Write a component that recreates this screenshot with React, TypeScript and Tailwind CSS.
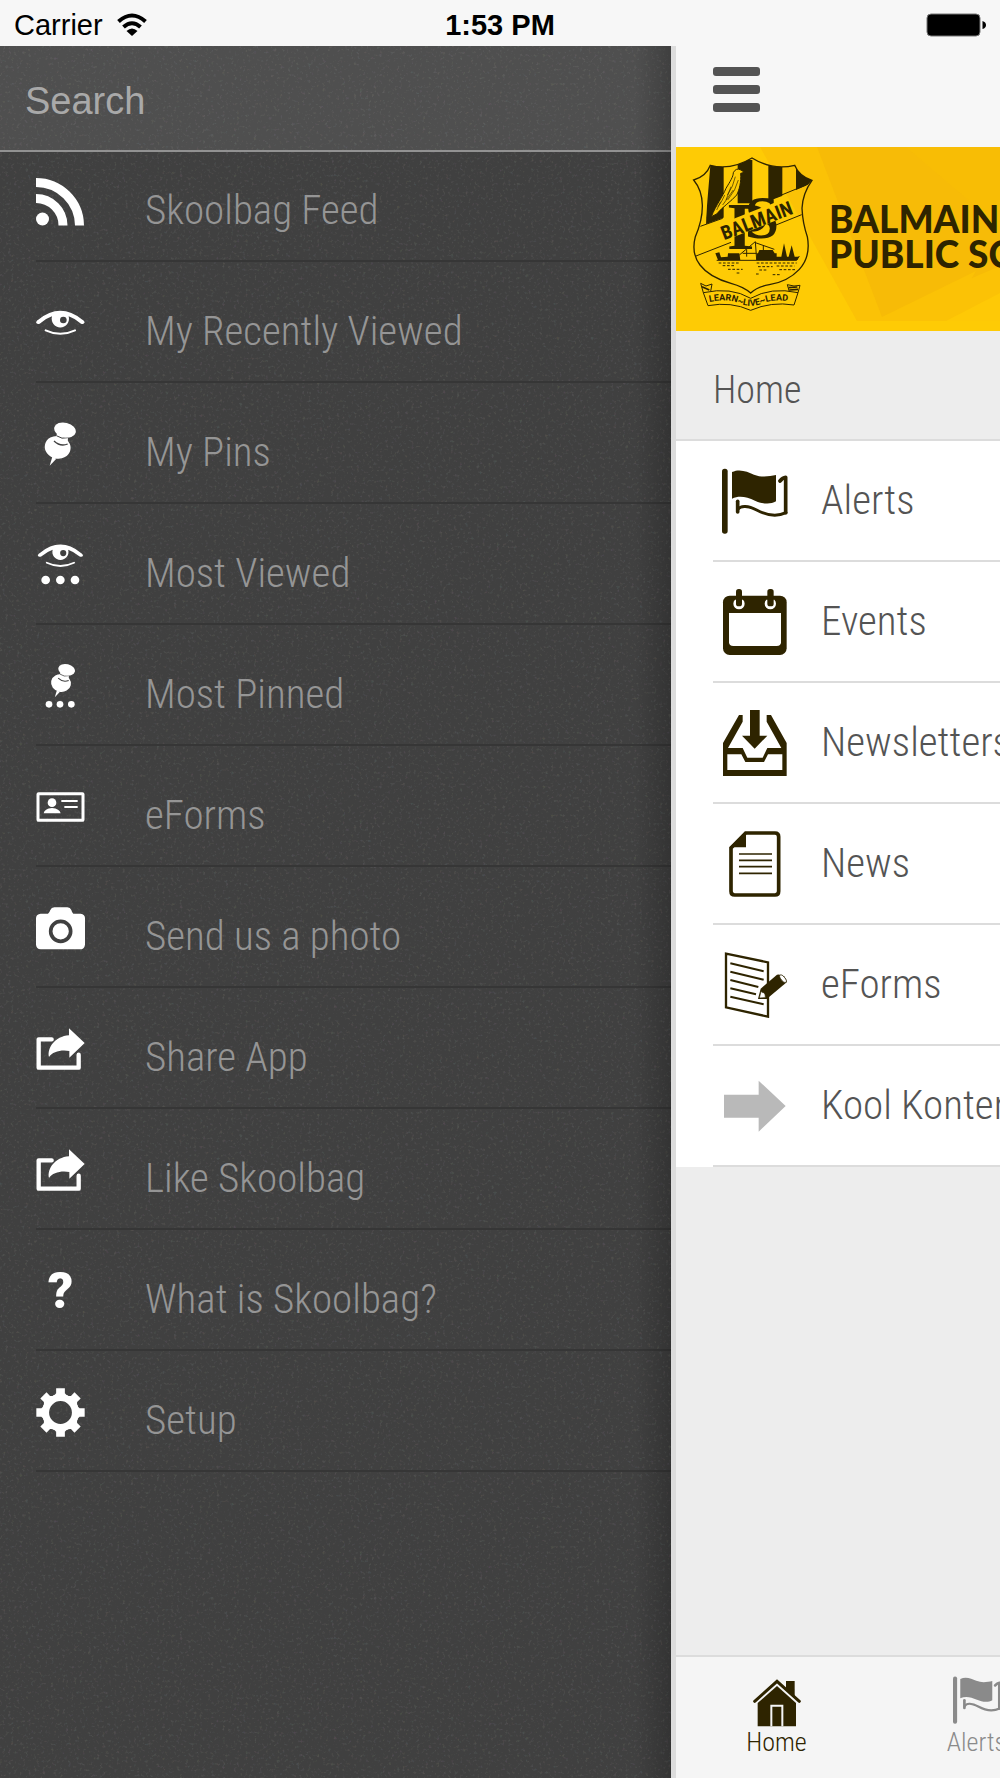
import type { ReactNode } from 'react'

interface MenuItem {
  label: string
  icon: ReactNode
}

const DARK = '#2e2400'

function FeedIcon() {
  return (
    <svg width="49" height="48" viewBox="0 0 49 48" fill="none" stroke="#fff" strokeWidth="9">
      <circle cx="6.5" cy="41" r="6.5" fill="#fff" stroke="none" />
      <path d="M0 20.5A27 27 0 0 1 27 47.5M0 4.5A43.5 43.5 0 0 1 43.5 47.5" />
    </svg>
  )
}

function EyeShape() {
  return (
    <g>
      <path d="M109 131Q111 125 118 122Q148 96 182 96Q216 96 246 122Q253 125 255 131Q253 138 244 135Q225 119 207 113A26 26 0 1 1 157 113Q139 119 120 135Q111 138 109 131Z" fill="#fff" />
      <circle cx="191" cy="124" r="10" fill="#404040" />
      <path d="M138 155Q182 176 226 155" fill="none" stroke="#fff" strokeWidth="6" strokeLinecap="round" />
    </g>
  )
}

function EyeIcon() {
  return (
    <svg width="49" height="26" viewBox="109 94 147 78">
      <EyeShape />
    </svg>
  )
}

function MostViewedIcon() {
  return (
    <svg width="49" height="42" viewBox="109 794 147 126">
      <g transform="translate(13 706) scale(.93)">
        <EyeShape />
      </g>
      <g fill="#fff">
        <circle cx="138" cy="902" r="13" />
        <circle cx="182" cy="902" r="13" />
        <circle cx="226" cy="902" r="13" />
      </g>
    </svg>
  )
}

function PinShape() {
  return (
    <g fill="#fff">
      <path d="M150 558L158 531L170 537Z" />
      <ellipse cx="174" cy="503" rx="39" ry="34" transform="rotate(12 174 503)" />
      <path d="M172 462L206 468L203 492Q184 504 163 486Z" />
      <path d="M163 484Q182 502 204 493" fill="none" stroke="#404040" strokeWidth="4" />
      <path d="M170 468Q186 480 206 474" fill="none" stroke="#404040" strokeWidth="3" />
      <ellipse cx="196" cy="451" rx="33" ry="22" transform="rotate(14 196 451)" />
    </g>
  )
}

function PinIcon() {
  return (
    <svg width="49" height="44" viewBox="109 427 147 132">
      <PinShape />
    </svg>
  )
}

function MostPinnedIcon() {
  return (
    <svg width="49" height="46" viewBox="109 130 147 138">
      <g transform="translate(50 -197) scale(.77)">
        <PinShape />
      </g>
      <g fill="#fff">
        <circle cx="148" cy="254" r="10" />
        <circle cx="181" cy="254" r="10" />
        <circle cx="215" cy="254" r="10" />
      </g>
    </svg>
  )
}

function CardIcon() {
  return (
    <svg width="49" height="30" viewBox="109 515 147 90" fill="none" stroke="#fff">
      <rect x="115" y="520" width="135" height="80" rx="2" strokeWidth="9" />
      <circle cx="157" cy="547" r="13" fill="#fff" stroke="none" />
      <path d="M132 579Q134 565 157 563Q180 565 183 579Z" fill="#fff" stroke="none" />
      <path d="M185 542H234M194 560H234" strokeWidth="6" />
    </svg>
  )
}

function CameraIcon() {
  return (
    <svg width="49" height="43" viewBox="108 857 147 129" fill="#fff">
      <path d="M122 877H144Q148 875 151 866Q154 858 163 858H202Q211 858 214 866Q216 875 220 877H242Q255 879 255 890V970Q253 984 240 984H122Q109 982 108 970V890Q109 878 122 877Z" />
      <circle cx="182" cy="930" r="30" stroke="#404040" strokeWidth="11" />
    </svg>
  )
}

function ShareIcon() {
  return (
    <svg width="49" height="43" viewBox="109 201 147 129">
      <path d="M156 235H117V320H237V281" fill="none" stroke="#fff" strokeWidth="13" strokeLinecap="round" strokeLinejoin="round" />
      <path d="M208 202L255 246L209 290V270C185 265 158 272 148 288C142 262 165 226 208 223Z" fill="#fff" />
    </svg>
  )
}

function GearIcon() {
  return (
    <svg width="49" height="49" viewBox="-73 -73 146 146">
      <circle r="44" fill="none" stroke="#fff" strokeWidth="20" />
      {[0, 45, 90, 135, 180, 225, 270, 315].map((angle) => (
        <path key={angle} d="M-13 -72H13V-57Q16 -52 24 -49L0 -40L-24 -49Q-16 -52 -13 -57Z" fill="#fff" transform={`rotate(${angle})`} />
      ))}
    </svg>
  )
}

function FlagIcon({ size, color }: { size: number; color: string }) {
  return (
    <svg width={size} height={size} viewBox="246 418 198 198" fill={color}>
      <rect x="246" y="420" width="17" height="195" rx="8" />
      <path d="M276 430C300 419 322 429 342 438C365 447 388 443 408 439V518C390 529 365 525 345 516C320 505 298 500 276 510Z" />
      <g fill="none" stroke={color} strokeLinecap="round">
        <path d="M293 518V550" strokeWidth="11" />
        <path d="M294 542C302 529 325 531 350 544C378 559 408 566 438 552" strokeWidth="9" />
        <path d="M437 552V446Q428 447 420 457" strokeWidth="11" strokeLinejoin="round" />
      </g>
    </svg>
  )
}

function CalendarIcon() {
  return (
    <svg width="66" height="66" viewBox="246 780 198 198">
      <rect x="249" y="800" width="191" height="178" rx="20" fill={DARK} />
      <path d="M267 852H423V940Q423 951 410 951H280Q267 951 267 940Z" fill="#fff" />
      <path d="M285 812A17 17 0 1 0 309 812ZM379 812A17 17 0 1 0 403 812Z" fill="#fff" />
      <rect x="288" y="780" width="18" height="52" rx="8" fill={DARK} />
      <rect x="382" y="780" width="19" height="52" rx="8" fill={DARK} />
    </svg>
  )
}

function InboxIcon() {
  return (
    <svg width="66" height="66" viewBox="246 33 198 198" fill={DARK} fillRule="evenodd">
      <path d="M330 33H359V110H382L344 149L306 110H330Z" />
      <path d="M297 48H308V68L264 147H308L322 176H368L382 147H424L380 68V48H393L440 132V231H249V132ZM262 166V213H427V166H384L372 189H316L304 166Z" />
    </svg>
  )
}

function NewsIcon() {
  return (
    <svg width="66" height="66" viewBox="246 395 198 198" fill="none" stroke={DARK}>
      <path d="M317 401H405Q416 401 416 412V576Q416 587 405 587H284Q273 587 273 576V446Z" strokeWidth="11" />
      <path d="M318 398V444H268Z" fill={DARK} stroke="none" />
      <path d="M297 464H396M297 483H396M297 502H396M297 522H396" strokeWidth="5" />
    </svg>
  )
}

function FormIcon() {
  return (
    <svg width="66" height="66" viewBox="246 68 198 198" fill="none" stroke={DARK}>
      <path d="M258 73L384 99V262L258 234Z" strokeWidth="7" />
      <path d="M271 102L371 126M271 127L371 151M271 152L355 173M271 177L348 195M271 202L371 225" strokeWidth="6" />
      <path d="M362 178L411 136Q434 133 441 158L380 209L354 209Z" fill={DARK} stroke="none" />
      <path d="M363 186Q367 191 372 190Q377 196 376 205L358 206Z" fill="#fff" stroke={DARK} strokeWidth="2" />
      <ellipse cx="429" cy="148" rx="6" ry="14" fill="#fff" stroke={DARK} strokeWidth="2" transform="rotate(-38 429 148)" />
    </svg>
  )
}

function ArrowIcon() {
  return (
    <svg width="66" height="66" viewBox="246 430 198 198" fill="#b9b9b9">
      <path d="M252 495H356V453L437 529L356 606V564H252Z" />
    </svg>
  )
}

function HouseIcon() {
  return (
    <svg width="48" height="48" viewBox="341 178 144 144" fill={DARK}>
      <path d="M440 184H466V232L440 208Z" />
      <path d="M413 193L474 246V322H351V246Z" fill="#f5f5f5" />
      <path d="M346 245L413 185L480 245" fill="none" stroke={DARK} strokeWidth="9" strokeLinecap="round" />
      <path d="M413 199L470 250V320H355V250Z" />
      <path d="M396 320V258H429V320" fill="none" stroke="#f5f5f5" strokeWidth="6" />
    </svg>
  )
}

function SchoolCrest() {
  return (
    <svg className="relative shrink-0" width="121" height="156" viewBox="98 48 363 468">
      <defs>
        <clipPath id="crest-top">
          <path d="M153 76Q215 92 278 54Q340 92 406 76Q420 110 458 121L440 141L123 259L139 245Z" />
        </clipPath>
        <path id="motto" d="M150 486Q200 476 230 487Q274 508 318 487Q350 476 404 486" />
      </defs>
      <g clipPath="url(#crest-top)" fill={DARK}>
        <path d="M145 60H193V240L140 262ZM235 60H279V190H235ZM327 60H369V170L327 190ZM410 60H460V128L410 150Z" />
      </g>
      <g fill="none" stroke={DARK} strokeWidth="4">
        <path d="M278 54Q340 92 406 76Q420 110 458 121Q430 160 428 205Q430 250 444 290Q455 350 420 388Q385 425 330 434Q295 440 274 459Q252 440 215 430Q150 412 122 375Q95 340 108 290Q130 240 129 195Q128 150 103 120Q140 110 153 76Q215 92 278 54Z" />
        <path d="M123 259L190 235M330 180L440 135M110 348L215 307M345 257L427 224" strokeWidth="3" />
      </g>
      <path d="M156 230C170 195 190 170 200 145C212 125 222 110 222 98Q230 82 245 90L255 97L244 100C246 125 240 150 232 165C215 185 190 200 172 222Z" fill="#fecb05" stroke={DARK} strokeWidth="3" />
      <path d="M228 110Q222 140 204 165M237 120Q230 150 205 180M196 165Q188 185 176 200M215 140L200 180M184 185L172 210M222 150L190 195" fill="none" stroke={DARK} strokeWidth="2" />
      <g fontFamily="'Liberation Serif', serif" fontWeight="700" fill={DARK}>
        <text x="205" y="326" fontSize="200">P</text>
        <text x="256" y="293" fontSize="185">S</text>
      </g>
      <path d="M174 256L366 180L384 228L190 304Z" fill="#fecb05" />
      <text x="194" y="301" fontSize="58" fontWeight="700" fontFamily="'Roboto Condensed', 'Roboto', sans-serif" fill={DARK} transform="rotate(-21 194 301)">
        BALMAIN
      </text>
      <g fill={DARK}>
        <path d="M168 340L180 337L185 352L205 350L206 340H240L243 360H176ZM292 340H352V350H418L414 360H292ZM366 350L374 310L383 350ZM388 350L397 316L406 350ZM300 330H340L346 340H296Z" />
      </g>
      <g fill="none" stroke={DARK} strokeWidth="3">
        <path d="M240 345L288 305L292 360M288 308L345 328M262 328V350M312 316V335M250 340H292M172 361H412L420 348" />
        <path d="M178 369H240M292 369H412M190 377H225M296 380H340M352 378H405M206 388H250M300 390H326M360 389H412M232 399H245M290 402H300M340 404H366" strokeDasharray="8 5" />
        <path d="M132 458Q215 440 274 475Q335 440 416 458L404 495Q335 484 274 511Q215 484 146 497ZM132 458L124 430L140 438L158 432L154 454M416 458L422 436L404 438L384 434L390 455" />
        <path d="M128 440L150 450M388 443L414 441M390 450L416 448" strokeWidth="5" />
      </g>
      <text fontSize="27" fontWeight="700" fontFamily="'Roboto', sans-serif" fill={DARK}>
        <textPath href="#motto">LEARN~LIVE~LEAD</textPath>
      </text>
    </svg>
  )
}

const drawerItems: MenuItem[] = [
  { label: 'Skoolbag Feed', icon: <FeedIcon /> },
  { label: 'My Recently Viewed', icon: <EyeIcon /> },
  { label: 'My Pins', icon: <PinIcon /> },
  { label: 'Most Viewed', icon: <MostViewedIcon /> },
  { label: 'Most Pinned', icon: <MostPinnedIcon /> },
  { label: 'eForms', icon: <CardIcon /> },
  { label: 'Send us a photo', icon: <CameraIcon /> },
  { label: 'Share App', icon: <ShareIcon /> },
  { label: 'Like Skoolbag', icon: <ShareIcon /> },
  { label: 'What is Skoolbag?', icon: <span className="font-['Roboto',sans-serif] text-[50px] leading-none font-black text-white">?</span> },
  { label: 'Setup', icon: <GearIcon /> },
]

const homeItems: MenuItem[] = [
  { label: 'Alerts', icon: <FlagIcon size={66} color={DARK} /> },
  { label: 'Events', icon: <CalendarIcon /> },
  { label: 'Newsletters', icon: <InboxIcon /> },
  { label: 'News', icon: <NewsIcon /> },
  { label: 'eForms', icon: <FormIcon /> },
  { label: 'Kool Kontent', icon: <ArrowIcon /> },
]

function StatusBar() {
  return (
    <header className="grid h-[46px] grid-cols-3 items-center bg-[#f7f7f7] pt-1 pr-3.5 pl-3.5 font-['Liberation_Sans',Arial,sans-serif] text-[29px] leading-none text-black">
      <div className="flex items-center gap-3.5">
        <span>Carrier</span>
        <svg width="30" height="24" viewBox="0 0 30 24" fill="none" stroke="#000" strokeWidth="4">
          <path d="M1.500 8.500Q15 -3.500 28.500 8.500M6.500 14Q15 6.500 23.500 14" />
          <path d="M15 23L9.500 18Q15 13 20.500 18Z" fill="#000" stroke="none" />
        </svg>
      </div>
      <span className="text-center font-bold">1:53 PM</span>
      <svg className="justify-self-end" width="60" height="24" viewBox="0 0 60 24">
        <rect x="1" y="1" width="53" height="22" rx="4" fill="#000" stroke="#777" />
        <path d="M56.500 8Q60 9 60 12Q60 15 56.500 16Z" />
      </svg>
    </header>
  )
}

function Drawer() {
  return (
    <nav className="relative min-w-0 flex-1 bg-[#404040]">
      <svg className="pointer-events-none absolute inset-0 h-full w-full opacity-10" aria-hidden="true">
        <filter id="grain">
          <feTurbulence type="fractalNoise" baseFrequency="0.35" numOctaves="2" />
          <feColorMatrix values="1 0 0 0 0  0 1 0 0 0  0 0 1 0 0  0 0 0 4 -2.2" />
        </filter>
        <rect width="100%" height="100%" filter="url(#grain)" />
      </svg>
      <div className="relative border-b-2 border-[#929292] bg-white/8">
        <input
          type="search"
          aria-label="Search"
          placeholder="Search"
          className="block h-[104px] w-full bg-transparent pt-1.5 pl-[25px] font-['Liberation_Sans',Arial,sans-serif] text-[38px] text-white outline-none placeholder:text-[#a9a9a9]"
        />
      </div>
      <ul className="relative -mt-[11px] pl-9">
        {drawerItems.map((item) => (
          <li key={item.label} className="border-b-2 border-[#363636]">
            <a href="#" className="flex h-[119px] items-center">
              <span className="flex w-[49px] justify-center pt-[3px]">{item.icon}</span>
              <span className="pt-[19px] pl-[60px] text-[41px] leading-none font-light whitespace-nowrap text-[#959595]">{item.label}</span>
            </a>
          </li>
        ))}
      </ul>
      <div className="pointer-events-none absolute inset-y-0 right-0 w-9 bg-linear-to-r from-transparent to-black/20" />
    </nav>
  )
}

function Banner() {
  return (
    <div className="relative flex h-[184px] items-start gap-4 overflow-hidden bg-[#fecb05] pt-[9px] pl-4">
      <svg className="absolute inset-0 h-full w-full" viewBox="0 0 324 184" preserveAspectRatio="none" aria-hidden="true">
        <path d="M84 0H324V174H181Z" fill="#fbc206" />
        <path d="M141 0H324V119L206 170Z" fill="#f7bb07" />
        <path d="M206 170L300 124L270 174H208Z" fill="#fbc206" />
        <path d="M270 174L324 146V174Z" fill="#fec906" />
        <path d="M230 0H324V80Z" fill="#f9be05" opacity=".6" />
      </svg>
      <SchoolCrest />
      <p className="relative pt-[45px] font-['Lato',sans-serif] text-[37px] leading-[35px] font-black whitespace-nowrap text-[#2e2400]">
        BALMAIN
        <br />
        PUBLIC SCHOOL
      </p>
    </div>
  )
}

function HomePanel() {
  return (
    <main className="flex w-[324px] shrink-0 flex-col overflow-hidden bg-[#ededed]">
      <div className="flex h-[101px] items-start bg-[#f7f7f7] pt-[21px] pl-[37px]">
        <button type="button" aria-label="Menu" className="flex w-[47px] flex-col gap-[9px]">
          <span className="h-[9px] rounded-[3px] bg-[#545454]" />
          <span className="h-[9px] rounded-[3px] bg-[#545454]" />
          <span className="h-[9px] rounded-[3px] bg-[#545454]" />
        </button>
      </div>
      <Banner />
      <h1 className="flex h-[110px] items-center border-b-2 border-[#dcdcdc] pt-2.5 pl-[37px] text-[38px] leading-none font-light text-[#545454]">Home</h1>
      <ul className="bg-white pl-[37px]">
        {homeItems.map((item) => (
          <li key={item.label} className="border-b-2 border-[#dcdcdc]">
            <a href="#" className="flex h-[119px] items-center pl-[9px]">
              <span className="shrink-0">{item.icon}</span>
              <span className="pl-[33px] text-[41px] leading-none font-light whitespace-nowrap text-[#545454]">{item.label}</span>
            </a>
          </li>
        ))}
      </ul>
      <div className="flex-1" />
      <nav className="flex h-[123px] border-t-2 border-[#dcdcdc] bg-[#f5f5f5] text-[26px] leading-none font-light">
        <a href="#" className="flex w-[200px] shrink-0 flex-col items-center gap-0.5 pt-[22px] pl-px text-[#2e2400]">
          <HouseIcon />
          Home
        </a>
        <a href="#" className="flex w-[200px] shrink-0 flex-col items-center gap-[5px] pt-[19px] pl-px text-[#8a8a8a]">
          <FlagIcon size={48} color="#8a8a8a" />
          Alerts
        </a>
      </nav>
    </main>
  )
}

export default function App() {
  return (
    <div className="flex min-h-screen flex-col overflow-hidden font-['Roboto_Condensed','Liberation_Sans_Narrow','Roboto',sans-serif]">
      <StatusBar />
      <div className="flex flex-1">
        <Drawer />
        <div className="w-[5px] shrink-0 bg-[#dcdcdc]" />
        <HomePanel />
      </div>
    </div>
  )
}
